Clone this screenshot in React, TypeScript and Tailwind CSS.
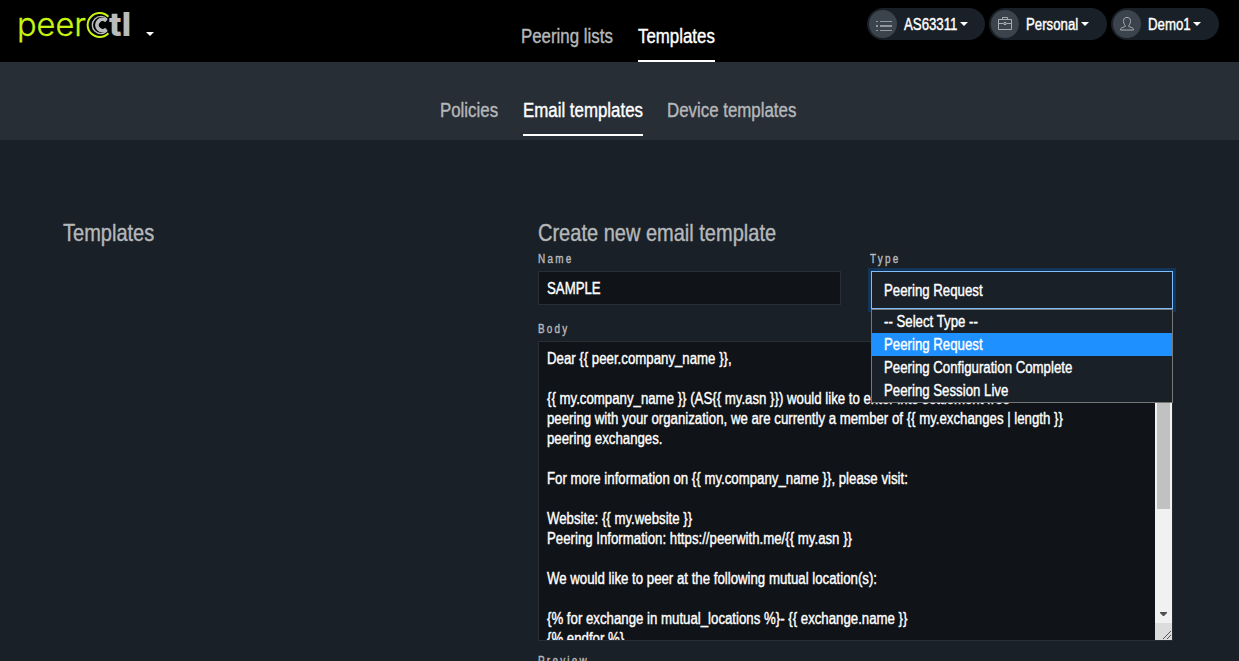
import type { ReactNode } from 'react';

const base = 'inline-block origin-left whitespace-pre [-webkit-text-stroke:0.4px_currentColor]';
const scales = {
  body: 'scale-x-[0.827]',
  nav: 'scale-x-[0.843]',
  title: 'scale-x-[0.834]',
};

function Narrow({ children, className = '', size = 'body' }: { children: ReactNode; className?: string; size?: keyof typeof scales }) {
  return (
    <span className={`block whitespace-nowrap ${className}`}>
      <span className={`${base} ${scales[size]}`}>{children}</span>
    </span>
  );
}

function Caret() {
  return (
    <svg width="8" height="4" viewBox="0 0 8 4" className="shrink-0" fill="#fff">
      <path d="M0 0h8L4 4z" />
    </svg>
  );
}

function Logo() {
  return (
    <svg width="114" height="40" viewBox="18 8 114 40" className="overflow-visible">
      <text x="17" y="36" className="font-['Inter',sans-serif] font-light" fontSize="33" fill="#c8f512" stroke="#c8f512" strokeWidth="0.3" textLength="69" lengthAdjust="spacingAndGlyphs">peer</text>
      <path d="M108.4 16.8A12 12 0 1 0 108.4 33.2" fill="none" stroke="#c8f512" strokeWidth="2" />
      <path d="M107 18.9A8.6 8.6 0 1 0 107 31.1" fill="none" stroke="#b9bbbd" strokeWidth="1.4" />
      <path d="M106.4 20.9A5.6 5.6 0 1 0 106.4 29.1" fill="none" stroke="#b9bbbd" strokeWidth="3.8" />
      <text x="109" y="36" className="font-['Inter',sans-serif] font-extrabold" fontSize="32" fill="#b9bbbd" textLength="22" lengthAdjust="spacingAndGlyphs">tl</text>
    </svg>
  );
}

function ListIcon() {
  return (
    <svg width="18" height="14" viewBox="0 0 18 14" className="mt-[3px] ml-[2px]" fill="#92989d" shapeRendering="crispEdges">
      <path d="M1 2h2v1H1zM1 6h2v2H1zM1 11h2v1H1zM5 2h12v1H5zM5 6h12v2H5zM5 11h12v1H5z" />
    </svg>
  );
}

function CaseIcon() {
  return (
    <svg width="16" height="16" viewBox="0 0 16 16" fill="none" stroke="#a8adb2">
      <path d="M1.5 3.5h13v10h-13zM5.5 3.5v-2h5v2M1.5 7.5h5M9.5 7.5h5M7 6.5h2v2H7z" />
    </svg>
  );
}

function UserIcon() {
  return (
    <svg width="16" height="16" viewBox="0 0 16 16" fill="none" stroke="#a8adb2">
      <path d="M6.2 9.4C4.7 7.9 4.4 6 4.6 4.2 4.8 2.2 6.2 1.5 8 1.5s3.2.7 3.4 2.7c.2 1.8-.1 3.7-1.6 5.2v1.1l3 1.1c1.2.4 1.7 1.1 1.7 2.4h-13c0-1.3.5-2 1.7-2.4l3-1.1z" />
    </svg>
  );
}

function Pill({ icon, label, className, labelClass }: { icon: ReactNode; label: string; className: string; labelClass: string }) {
  return (
    <button className={`flex h-8 items-center rounded-full bg-[#192027] pl-[2px] ${className}`}>
      <span className="flex size-7 shrink-0 items-center justify-center rounded-full bg-[#3b444d]">{icon}</span>
      <Narrow className={`ml-[7px] pt-[2px] text-base text-white ${labelClass}`}>{label}</Narrow>
      <Caret />
    </button>
  );
}

function Label({ children }: { children: ReactNode }) {
  return <div className="h-[18px] text-[12px] leading-[18px] tracking-[2.7px] text-[#b5b8ba]"><Narrow>{children}</Narrow></div>;
}

const body = [
  'Dear {{ peer.company_name }},',
  '',
  '{{ my.company_name }} (AS{{ my.asn }}) would like to enter into settlement free',
  'peering with your organization, we are currently a member of {{ my.exchanges | length }}',
  'peering exchanges.',
  '',
  'For more information on {{ my.company_name }}, please visit:',
  '',
  'Website: {{ my.website }}',
  'Peering Information: https://peerwith.me/{{ my.asn }}',
  '',
  'We would like to peer at the following mutual location(s):',
  '',
  '{% for exchange in mutual_locations %}- {{ exchange.name }}',
  '{% endfor %}',
];

const options = ['-- Select Type --', 'Peering Request', 'Peering Configuration Complete', 'Peering Session Live'];

export default function App() {
  return (
    <div className="h-[661px] overflow-hidden bg-[#192027] font-['Liberation_Sans',Arial,sans-serif] text-white">
      <header className="flex h-[62px] items-start justify-between bg-black pr-5 pl-[18px]">
        <div className="flex w-[503px] items-start pt-2">
          <Logo />
          <div className="mt-[24px] ml-[14px] flex"><Caret /></div>
        </div>
        <nav className="flex w-[346px] gap-6 text-xl">
          <Narrow size="nav" className="h-[62px] w-[93px] pt-[22px] leading-7 text-[#b5b8ba]">Peering lists</Narrow>
          <Narrow size="nav" className="h-[62px] w-[77px] border-b-2 border-white pt-[22px] leading-7">Templates</Narrow>
        </nav>
        <div className="flex gap-1 pt-2">
          <Pill icon={<ListIcon />} label="AS63311" className="w-[118px]" labelClass="w-[56px]" />
          <Pill icon={<CaseIcon />} label="Personal" className="w-[118px]" labelClass="w-[55px]" />
          <Pill icon={<UserIcon />} label="Demo1" className="w-[108px]" labelClass="w-[45px]" />
        </div>
      </header>

      <nav className="flex h-[78px] gap-6 bg-[#282e36] pl-[440px] text-xl leading-7 text-[#b5b8ba]">
        <Narrow size="nav" className="h-[74px] w-[59px] pt-[34px]">Policies</Narrow>
        <Narrow size="nav" className="h-[74px] w-[120px] border-b-2 border-white pt-[34px] text-white">Email templates</Narrow>
        <Narrow size="nav" className="h-[74px] w-[129px] pt-[34px]">Device templates</Narrow>
      </nav>

      <main className="flex pt-[77px] pl-[63px]">
        <h2 className="w-[475px] text-2xl leading-8 text-[#b5b8ba]"><Narrow size="title">Templates</Narrow></h2>
        <section className="w-[635px]">
          <h2 className="h-[33px] text-2xl leading-8 text-[#b5b8ba]"><Narrow size="title">Create new email template</Narrow></h2>
          <div className="flex h-[70px] gap-[29px]">
            <div className="w-[303px]">
              <Label>Name</Label>
              <div className="mt-[3px] flex h-[34px] items-center border border-[#282e36] bg-[#101317] pt-[2px] pl-2">
                <Narrow>SAMPLE</Narrow>
              </div>
            </div>
            <div className="relative w-[303px]">
              <Label>Type</Label>
              <div className="mt-[3px] ml-px flex h-[38px] items-center border border-[#80bdff] bg-[#192027] pt-[2px] pl-3 shadow-[0_0_0_3px_#12365a]">
                <Narrow>Peering Request</Narrow>
              </div>
              <ul className="absolute top-[59px] left-px z-10 w-[302px] border border-[#777] bg-[#192027]">
                {options.map((option, i) => (
                  <li key={option} className={`h-[23px] pl-3 leading-[23px] ${i === 1 ? 'bg-[#1e90ff]' : ''}`}>
                    <Narrow>{option}</Narrow>
                  </li>
                ))}
              </ul>
            </div>
          </div>
          <Label>Body</Label>
          <div className="mt-[3px] flex h-[300px] overflow-hidden border border-[#282e36] bg-[#101317]">
            <div className="w-[616px] shrink-0 pt-[7px] pl-2 leading-5">
              {body.map((line, i) => (
                <Narrow key={i} className="h-5">{line}</Narrow>
              ))}
            </div>
            <div className="flex w-[17px] shrink-0 flex-col items-center justify-between bg-[#f1f1f1]">
              <div className="h-[167px] w-[13px] bg-[#c1c1c1]" />
              <div className="flex w-[17px] flex-col items-center">
                <svg width="7" height="4" viewBox="0 0 7 4" fill="#505050" className="mb-[7px]"><path d="M0 0h7v1L4 4H3L0 1z" /></svg>
                <svg width="17" height="17" viewBox="0 0 17 17" className="bg-[#dcdcdc]">
                  <path d="M8 16l8-8M12 16l4-4" stroke="#555" />
                </svg>
              </div>
            </div>
          </div>
          <div className="mt-[11px]"><Label>Preview</Label></div>
        </section>
      </main>
    </div>
  );
}
